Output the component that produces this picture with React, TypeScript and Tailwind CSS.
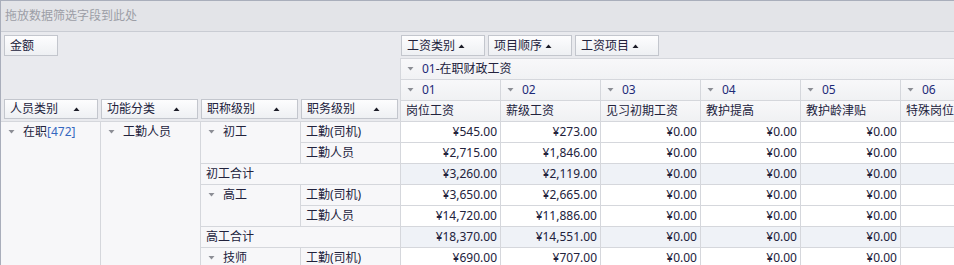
import React from "react";

// Pivot grid: salary items by staff category / function / title / duty.

const LINE = "border-[#d5d7dc]";
const INK = "text-[#22223c]";

const COLUMNS = [
  { code: "01", name: "岗位工资" },
  { code: "02", name: "薪级工资" },
  { code: "03", name: "见习初期工资" },
  { code: "04", name: "教护提高" },
  { code: "05", name: "教护龄津贴" },
  { code: "06", name: "特殊岗位津贴" },
];

type Row = { values: string[]; total?: boolean };

const ROWS: Row[] = [
  { values: ["¥545.00", "¥273.00", "¥0.00", "¥0.00", "¥0.00", ""] },
  { values: ["¥2,715.00", "¥1,846.00", "¥0.00", "¥0.00", "¥0.00", ""] },
  { values: ["¥3,260.00", "¥2,119.00", "¥0.00", "¥0.00", "¥0.00", ""], total: true },
  { values: ["¥3,650.00", "¥2,665.00", "¥0.00", "¥0.00", "¥0.00", ""] },
  { values: ["¥14,720.00", "¥11,886.00", "¥0.00", "¥0.00", "¥0.00", ""] },
  { values: ["¥18,370.00", "¥14,551.00", "¥0.00", "¥0.00", "¥0.00", ""], total: true },
  { values: ["¥690.00", "¥707.00", "¥0.00", "¥0.00", "¥0.00", ""] },
];

function ExpandArrow() {
  return (
    <svg width="7" height="4" viewBox="0 0 7 4" className="shrink-0">
      <path d="M0.5 0H6.5L3.5 3.5Z" fill="#8c8e95" />
    </svg>
  );
}

function SortArrow() {
  return (
    <svg width="7" height="4" viewBox="0 0 7 4" className="shrink-0">
      <path d="M0.5 4H6.5L3.5 0.5Z" fill="#1b1b26" />
    </svg>
  );
}

function FieldButton({ label, width, sort = true }: { label: string; width: string; sort?: boolean }) {
  return (
    <div
      className={`flex items-center justify-between border border-[#c3c6cd] bg-gradient-to-b from-[#fdfdfe] to-[#eef0f3] pl-[5px] pr-[17px] ${width}`}
    >
      <span className="leading-[18px]">{label}</span>
      {sort && <SortArrow />}
    </div>
  );
}

function RowHeader({ children, className = "", arrow = false }: { children: React.ReactNode; className?: string; arrow?: boolean }) {
  return (
    <div className={`border-r border-b ${LINE} bg-[#f7f7f9] ${className}`}>
      <div className={`flex h-[20px] items-center ${arrow ? "gap-[8px] pl-[7px]" : "pl-[5px]"}`}>
        {arrow && <ExpandArrow />}
        <span className="whitespace-nowrap">{children}</span>
      </div>
    </div>
  );
}

export default function App() {
  return (
    <div
      className={`h-[265px] w-[954px] overflow-hidden border-t border-l border-[#a9aebb] bg-white text-[12px] ${INK} font-['Noto_Sans','Noto_Sans_CJK_SC',sans-serif]`}
    >
      {/* filter drop zone */}
      <div className="flex h-[31px] items-center border-b border-[#c9ccd3] bg-[#e3e4e8] pl-[4px] text-[#9c9ea6]">
        拖放数据筛选字段到此处
      </div>

      {/* header block */}
      <div className="flex bg-[#e9eaee]">
        <div className={`flex h-[90px] w-[399px] shrink-0 flex-col justify-between border-b ${LINE} pt-[3px] pb-[2px]`}>
          <div className="ml-[3px] flex">
            <FieldButton label="金额" width="w-[54px] h-[21px] pr-[5px]" sort={false} />
          </div>
          <div className="ml-[3px] flex gap-[3px]">
            <FieldButton label="人员类别" width="w-[94px] h-[20px]" />
            <FieldButton label="功能分类" width="w-[97px] h-[20px]" />
            <FieldButton label="职称级别" width="w-[97px] h-[20px]" />
            <FieldButton label="职务级别" width="w-[97px] h-[20px]" />
          </div>
        </div>

        <div className="flex min-w-0 flex-1 flex-col">
          <div className="flex h-[26px] gap-[3px] pt-[3px] pl-[1px]">
            <FieldButton label="工资类别" width="w-[84px] h-[21px] pr-[19px]" />
            <FieldButton label="项目顺序" width="w-[84px] h-[21px] pr-[19px]" />
            <FieldButton label="工资项目" width="w-[84px] h-[21px] pr-[19px]" />
          </div>
          <div className={`flex h-[22px] items-center gap-[8px] border-y border-l ${LINE} bg-gradient-to-b from-[#f8f8fa] to-[#f1f2f4] pl-[6px]`}>
            <ExpandArrow />
            <span className="whitespace-nowrap">
              <span className="text-[#1e2a78]">01</span>-在职财政工资
            </span>
          </div>
          <div className={`flex h-[21px] border-b border-l ${LINE}`}>
            {COLUMNS.map((c) => (
              <div
                key={c.code}
                className={`flex w-[100px] shrink-0 items-center gap-[8px] border-r ${LINE} bg-gradient-to-b from-[#f8f8fa] to-[#f0f1f3] pl-[6px]`}
              >
                <ExpandArrow />
                <span className="text-[#1e2a78]">{c.code}</span>
              </div>
            ))}
          </div>
          <div className={`flex h-[21px] border-b border-l ${LINE}`}>
            {COLUMNS.map((c) => (
              <div
                key={c.code}
                className={`flex w-[100px] shrink-0 items-center border-r ${LINE} bg-gradient-to-b from-[#f8f8fa] to-[#f0f1f3] pl-[5px] whitespace-nowrap`}
              >
                {c.name}
              </div>
            ))}
          </div>
        </div>
      </div>

      {/* body */}
      <div className="grid grid-cols-[repeat(10,100px)] auto-rows-[21px]">
        {ROWS.map((row, r) => (
          <React.Fragment key={r}>
            {r === 0 && (
              <>
                <RowHeader arrow className="row-span-7">
                  在职<span className="text-[#3567c0]">[472]</span>
                </RowHeader>
                <RowHeader arrow className="row-span-7">
                  工勤人员
                </RowHeader>
                <RowHeader arrow className="row-span-2">
                  初工
                </RowHeader>
                <RowHeader>工勤(司机)</RowHeader>
              </>
            )}
            {r === 1 && <RowHeader>工勤人员</RowHeader>}
            {r === 2 && <RowHeader className="col-span-2">初工合计</RowHeader>}
            {r === 3 && (
              <>
                <RowHeader arrow className="row-span-2">
                  高工
                </RowHeader>
                <RowHeader>工勤(司机)</RowHeader>
              </>
            )}
            {r === 4 && <RowHeader>工勤人员</RowHeader>}
            {r === 5 && <RowHeader className="col-span-2">高工合计</RowHeader>}
            {r === 6 && (
              <>
                <RowHeader arrow className="row-span-2">
                  技师
                </RowHeader>
                <RowHeader>工勤(司机)</RowHeader>
              </>
            )}
            {row.values.map((v, i) => (
              <div
                key={i}
                className={`flex items-center justify-end border-r border-b ${LINE} pr-[3px] ${
                  row.total ? "bg-[#eff2f7]" : "bg-white"
                }`}
              >
                {v}
              </div>
            ))}
          </React.Fragment>
        ))}
      </div>
    </div>
  );
}
